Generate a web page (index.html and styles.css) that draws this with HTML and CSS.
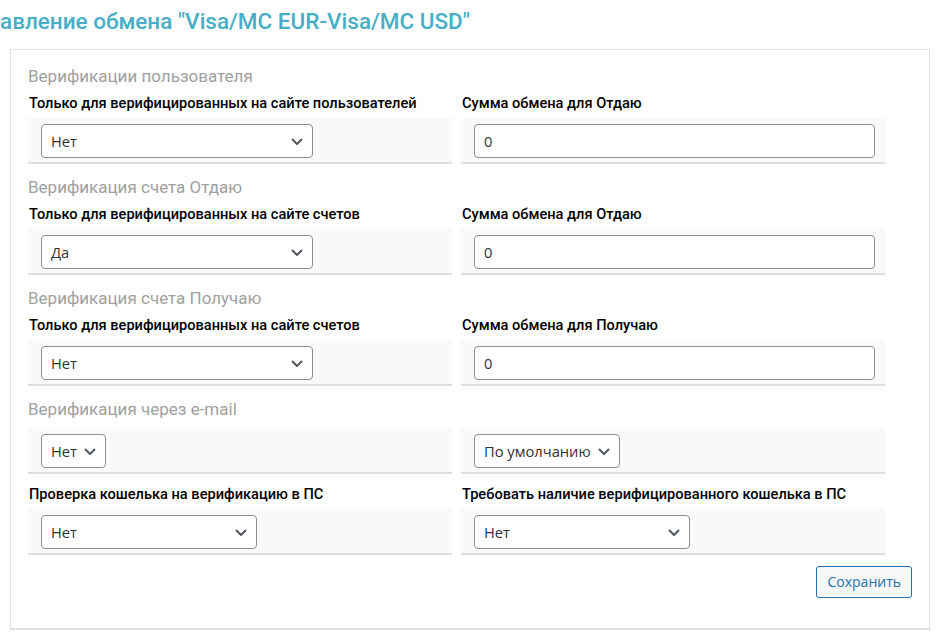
FILE: index.html
```html
<!DOCTYPE html>
<html lang="ru">
<head>
<meta charset="utf-8">
<title>Управление обмена</title>
<link rel="stylesheet" href="styles.css">
</head>
<body>
<h1 class="page-title">авление обмена "Visa/MC EUR-Visa/MC USD"</h1>
<div class="panel">
  <section class="group">
    <h3 class="group-title">Верификации пользователя</h3>
    <div class="cols">
      <div class="cell">
        <div class="label">Только для верифицированных на сайте пользователей</div>
        <div class="field-row">
          <div class="sel sel-wide"><span>Нет</span><svg class="chev" viewBox="0 0 12 7"><path d="M1 1l5 5 5-5"/></svg></div>
        </div>
      </div>
      <div class="cell">
        <div class="label">Сумма обмена для Отдаю</div>
        <div class="field-row">
          <div class="inp">0</div>
        </div>
      </div>
    </div>
  </section>

  <section class="group">
    <h3 class="group-title">Верификация счета Отдаю</h3>
    <div class="cols">
      <div class="cell">
        <div class="label">Только для верифицированных на сайте счетов</div>
        <div class="field-row">
          <div class="sel sel-wide"><span>Да</span><svg class="chev" viewBox="0 0 12 7"><path d="M1 1l5 5 5-5"/></svg></div>
        </div>
      </div>
      <div class="cell">
        <div class="label">Сумма обмена для Отдаю</div>
        <div class="field-row">
          <div class="inp">0</div>
        </div>
      </div>
    </div>
  </section>

  <section class="group">
    <h3 class="group-title">Верификация счета Получаю</h3>
    <div class="cols">
      <div class="cell">
        <div class="label">Только для верифицированных на сайте счетов</div>
        <div class="field-row">
          <div class="sel sel-wide"><span>Нет</span><svg class="chev" viewBox="0 0 12 7"><path d="M1 1l5 5 5-5"/></svg></div>
        </div>
      </div>
      <div class="cell">
        <div class="label">Сумма обмена для Получаю</div>
        <div class="field-row">
          <div class="inp">0</div>
        </div>
      </div>
    </div>
  </section>

  <section class="group group-email">
    <h3 class="group-title">Верификация через e-mail</h3>
    <div class="cols">
      <div class="cell">
        <div class="field-row">
          <div class="sel sel-auto"><span>Нет</span><svg class="chev" viewBox="0 0 12 7"><path d="M1 1l5 5 5-5"/></svg></div>
        </div>
      </div>
      <div class="cell">
        <div class="field-row">
          <div class="sel sel-auto"><span>По умолчанию</span><svg class="chev" viewBox="0 0 12 7"><path d="M1 1l5 5 5-5"/></svg></div>
        </div>
      </div>
    </div>
    <div class="cols cols-next">
      <div class="cell">
        <div class="label">Проверка кошелька на верификацию в ПС</div>
        <div class="field-row">
          <div class="sel sel-mid"><span>Нет</span><svg class="chev" viewBox="0 0 12 7"><path d="M1 1l5 5 5-5"/></svg></div>
        </div>
      </div>
      <div class="cell">
        <div class="label">Требовать наличие верифицированного кошелька в ПС</div>
        <div class="field-row">
          <div class="sel sel-mid"><span>Нет</span><svg class="chev" viewBox="0 0 12 7"><path d="M1 1l5 5 5-5"/></svg></div>
        </div>
      </div>
    </div>
  </section>

  <div class="actions">
    <button class="btn" type="button">Сохранить</button>
  </div>
</div>
</body>
</html>
```

FILE: styles.css
```css
html, body {
  margin: 0;
  padding: 0;
  background: #ffffff;
}

body {
  font-family: Roboto, "Liberation Sans", sans-serif;
  color: #1d2327;
  width: 946px;
  overflow: hidden;
}

.page-title {
  margin: 0;
  padding: 6px 0 0 0;
  height: 43px;
  box-sizing: border-box;
  font-family: Roboto, sans-serif;
  font-weight: 500;
  font-size: 22.5px;
  line-height: 30px;
  color: #47aec5;
  white-space: nowrap;
}

.panel {
  margin-left: 10px;
  margin-top: 6px;
  width: 920px;
  box-sizing: border-box;
  border: 1px solid #e2e2e2;
  border-bottom: 2px solid #e0e0e0;
  background: #fff;
  padding: 14px 17px 30px 17px;
}

.group {
  margin-bottom: 11px;
}

.group-title {
  margin: 0 0 5px 0;
  font-size: 17px;
  font-weight: 400;
  line-height: 24px;
  color: #a0a0a0;
}

.cols {
  display: grid;
  grid-template-columns: 424px 424px;
  column-gap: 9px;
}

.cols-next {
  margin-top: 10px;
}

.group-email .group-title {
  margin-bottom: 7px;
}

.label {
  font-size: 14.6px;
  font-weight: 500;
  line-height: 20px;
  color: #000;
  margin: 0 0 5px 1px;
  white-space: nowrap;
}

.field-row {
  background: #f9f9f9;
  border-bottom: 2px solid #dedede;
  padding: 6px 13px 4px 13px;
  box-sizing: content-box;
  height: 34px;
}

.sel,
.inp {
  position: relative;
  box-sizing: border-box;
  height: 34px;
  border: 1px solid #8c8f94;
  border-radius: 4px;
  background: #fff;
  font-family: "Open Sans", "Noto Sans", sans-serif;
  font-size: 14.7px;
  line-height: 32px;
  color: #2c3338;
  padding: 0 30px 0 9px;
}

.inp {
  width: 401px;
  padding-right: 9px;
}

.sel-wide { width: 272px; }
.sel-mid { width: 216px; }
.sel-auto { display: inline-block; padding-right: 28px; }

.chev {
  position: absolute;
  right: 9px;
  top: 13px;
  width: 12px;
  height: 7px;
  fill: none;
  stroke: #50575e;
  stroke-width: 2;
}

.actions {
  display: flex;
  justify-content: flex-end;
  margin-top: 1px;
  padding-right: 0;
}

.btn {
  box-sizing: border-box;
  height: 32px;
  padding: 0 10px;
  border: 1px solid #2271b1;
  border-radius: 3px;
  background: #f6f7f7;
  color: #2271b1;
  font-family: "Open Sans", "Noto Sans", sans-serif;
  font-size: 14px;
  line-height: 30px;
  cursor: pointer;
}
```
